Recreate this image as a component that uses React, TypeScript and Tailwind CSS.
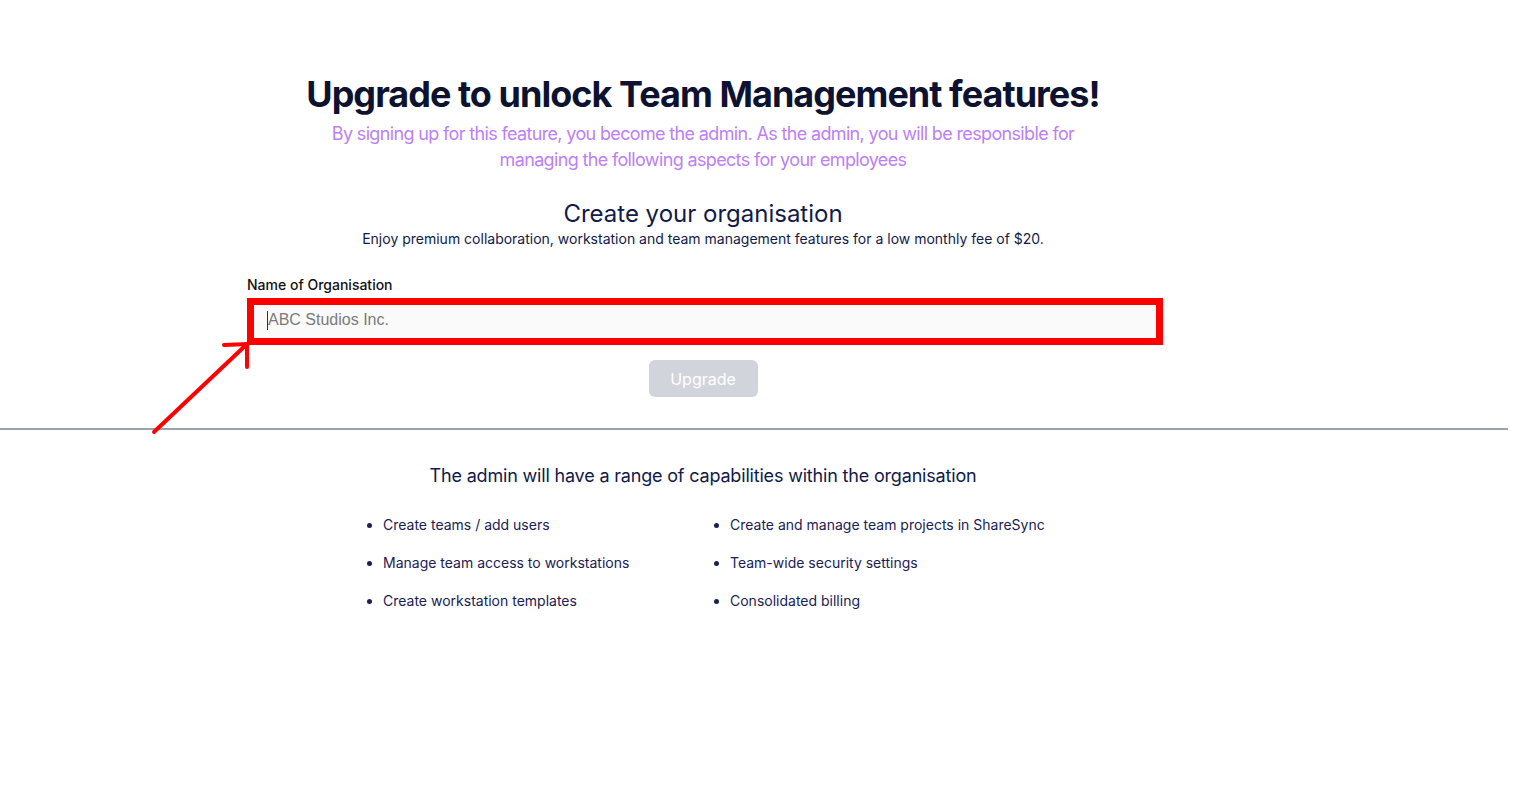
import React from "react";

const left = ["Create teams / add users", "Manage team access to workstations", "Create workstation templates"];
const right = ["Create and manage team projects in ShareSync", "Team-wide security settings", "Consolidated billing"];

function Bullet({ text }: { text: string }) {
  return (
    <li className="flex items-center h-[20px] text-[14px] leading-[20px] text-[#1b2155]">
      <span className="w-[5px] h-[5px] rounded-full bg-[#1b2155] ml-[3px] mr-[11px]" />
      {text}
    </li>
  );
}

export default function App() {
  return (
    <div className="relative min-h-screen w-full bg-white" style={{ fontFamily: "Inter, 'Noto Sans', sans-serif" }}>
      <div className="w-[1508px]">
        <div className="pl-[247px] pt-[72px]">
          <div className="w-[916px] flex flex-col items-start">
            <div className="w-[912px] flex flex-col items-center text-center">
              <h1 className="text-[36px] leading-[44px] font-bold text-[#0d1230] tracking-[-0.027em]">
                Upgrade to unlock Team Management features!
              </h1>
              <p className="mt-[5px] w-[760px] text-[18px] leading-[26px] text-[#bd80f5] tracking-[-0.036em]">
                By signing up for this feature, you become the admin. As the admin, you will be responsible for managing the following aspects for your employees
              </p>
              <h2 className="mt-[25px] text-[24px] leading-[32px] text-[#111a4a]">Create your organisation</h2>
              <p className="mt-[-1px] text-[14px] leading-[20px] text-[#111a4a]">
                Enjoy premium collaboration, workstation and team management features for a low monthly fee of $20.
              </p>
            </div>
            <div className="mt-[26px] w-full text-left">
              <label className="block text-[14px] leading-[20px] font-medium text-[#111111]">Name of Organisation</label>
              <div className="relative mt-[3px] h-[47px] w-full">
                <textarea
                  placeholder="ABC Studios Inc."
                  className="block h-full w-full bg-[#fafafa] border border-[#d1d5db] pl-[20px] pt-[11px] text-[16px] leading-[20px] text-[#333] placeholder:text-[#7a7a7a] outline-none"
                  style={{ fontFamily: "'Liberation Sans', Arial, sans-serif" }}
                />
                <div className="pointer-events-none absolute inset-0 border-[7px] border-[#ff0000]" />
                <div className="pointer-events-none absolute left-[20px] top-[13px] w-px h-[19px] bg-[#333]" />
              </div>
            </div>
            <div className="w-[912px] flex justify-center">
              <button className="mt-[15px] h-[37px] w-[109px] rounded-md bg-[#d1d5db] text-white text-[16px]">
                Upgrade
              </button>
            </div>
          </div>
        </div>
        <div className="mt-[31px] h-[2px] w-full bg-[#9ca3af]" />
        <div className="pl-[247px]">
          <div className="w-[912px] flex flex-col items-center">
            <h3 className="mt-[32px] text-[18px] leading-[28px] text-[#111a4a] tracking-[-0.01em]">
              The admin will have a range of capabilities within the organisation
            </h3>
          </div>
          <div className="ml-[117px] mt-[25px] grid grid-cols-[347px_347px]">
            <ul className="flex flex-col gap-[18px]">
              {left.map((t) => (
                <Bullet key={t} text={t} />
              ))}
            </ul>
            <ul className="flex flex-col gap-[18px]">
              {right.map((t) => (
                <Bullet key={t} text={t} />
              ))}
            </ul>
          </div>
        </div>
      </div>
      <svg className="pointer-events-none absolute left-0 top-0" width="400" height="500" viewBox="0 0 400 500">
        <g stroke="#ff0000" strokeWidth="4" strokeLinecap="round" fill="none">
          <line x1="154" y1="432" x2="246" y2="345" />
          <line x1="224" y1="345" x2="248" y2="344" />
          <line x1="247" y1="344" x2="247" y2="367" />
        </g>
      </svg>
    </div>
  );
}
